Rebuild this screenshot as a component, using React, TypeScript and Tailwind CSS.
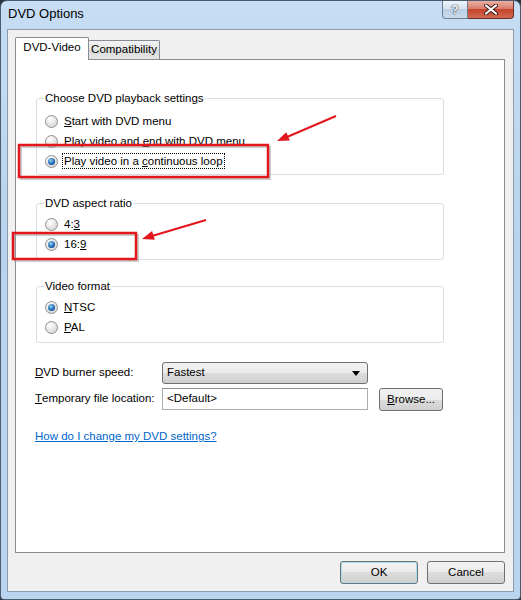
import * as React from 'react';

const font = { fontFamily: '"Liberation Sans", Arial, sans-serif' };

const Radio: React.FC<{ checked?: boolean }> = ({ checked }) => (
  <span className="ml-px flex h-[13px] w-[13px] shrink-0 items-center justify-center rounded-full border border-[#8e8f8f] bg-[radial-gradient(circle_at_35%_30%,#ffffff,#dcdcdc_70%,#cfcfcf)]">
    {checked ? (
      <span className="h-[7px] w-[7px] rounded-full bg-[radial-gradient(circle_at_40%_35%,#8fd0f7,#1a62ad_60%,#0d3f7a)]" />
    ) : null}
  </span>
);

const Option: React.FC<{ checked?: boolean; focused?: boolean; children: React.ReactNode }> = ({
  checked,
  focused,
  children,
}) => (
  <div className="flex h-[20px] items-center gap-[4px]">
    <Radio checked={checked} />
    <span className={focused ? 'border border-dotted border-black px-px leading-[14px]' : 'px-[2px] leading-[14px]'}>
      {children}
    </span>
  </div>
);

const GroupBox: React.FC<{ title: string; className?: string; children: React.ReactNode }> = ({
  title,
  className,
  children,
}) => (
  <fieldset className={`w-[408px] rounded-[3px] border border-[#d5dfe5] px-[7px] ${className ?? ''}`}>
    <legend className="px-px leading-[16px]">{title}</legend>
    {children}
  </fieldset>
);

const buttonClass =
  'flex items-center justify-center rounded-[3px] border border-[#707070] bg-[linear-gradient(#f2f2f2_0%,#ebebeb_50%,#dddddd_50%,#cfcfcf_100%)]';

export default function App() {
  return (
    <div className="relative h-[600px] w-[521px] bg-[#2a3440] text-[11.5px] text-black" style={font}>
      <div className="flex h-full flex-col rounded-t-[7px] rounded-b-[4px] border border-[#4b5c6e] bg-[linear-gradient(#c6ddf3,#b9d3ee_40%,#bad4ef)] px-[6px] pb-[7px]">
        {/* title bar */}
        <div className="flex h-[28px] items-start justify-between">
          <span className="pl-px pt-[5px] text-[13px] leading-[16px]">DVD Options</span>
          <div className="flex">
            <div className="flex h-[18px] w-[26px] items-center justify-center rounded-bl-[4px] border border-t-0 border-[#6d7f94] bg-[linear-gradient(#eef4fa,#d3e1ef_50%,#bccfe3_50%,#c9daea)]">
              <span className="text-[12px] font-bold leading-none text-white [text-shadow:0_0_1px_#2b3d52,0_0_1px_#2b3d52,0_0_1px_#2b3d52]">
                ?
              </span>
            </div>
            <div className="flex h-[18px] w-[46px] items-center justify-center rounded-br-[4px] border border-l-0 border-t-0 border-[#6b2d26] bg-[linear-gradient(#eab0a4,#d87765_50%,#c5442c_50%,#d2694f)]">
              <svg width="14" height="11" viewBox="0 0 14 11">
                <path d="M2 1.5 L12 9.5 M12 1.5 L2 9.5" stroke="#3a1a16" strokeWidth="4" strokeLinecap="round" />
                <path d="M2 1.5 L12 9.5 M12 1.5 L2 9.5" stroke="#ffffff" strokeWidth="2.2" strokeLinecap="round" />
              </svg>
            </div>
          </div>
        </div>

        {/* client area */}
        <div className="flex flex-1 flex-col border border-[#8d9bab] bg-[#f0f0f0] pt-[7px] pr-[8px] pb-[7px] pl-[7px]">
          <div className="flex h-[22px] items-end">
            <div className="relative z-10 -mb-px flex h-[23px] w-[74px] items-center justify-center rounded-t-[2px] border border-b-0 border-[#898c95] bg-white pb-[2px]">
              DVD-Video
            </div>
            <div className="-ml-px flex h-[19px] w-[72px] items-center justify-center rounded-t-[2px] border border-b-0 border-[#898c95] bg-[linear-gradient(#f3f3f3,#e5e5e5_50%,#d9d9d9_50%,#e6e6e6)]">
              Compatibility
            </div>
          </div>

          <div className="flex h-[494px] flex-col border border-[#898c95] bg-white pl-[20px]">
            <GroupBox title="Choose DVD playback settings" className="mt-[30px] pt-[5px] pb-[3px]">
              <Option>
                <u>S</u>tart with DVD menu
              </Option>
              <Option>
                Play video and <u>e</u>nd with DVD menu
              </Option>
              <Option checked focused>
                Play video in a <u>c</u>ontinuous loop
              </Option>
            </GroupBox>

            <GroupBox title="DVD aspect ratio" className="mt-[20px] pt-[3px] pb-[5px]">
              <Option>
                4:<u>3</u>
              </Option>
              <Option checked>
                16:<u>9</u>
              </Option>
            </GroupBox>

            <GroupBox title="Video format" className="mt-[18px] pt-[3px] pb-[5px]">
              <Option checked>
                <u>N</u>TSC
              </Option>
              <Option>
                <u>P</u>AL
              </Option>
            </GroupBox>

            <div className="mt-[19px] -ml-px flex h-[22px] items-center">
              <span className="w-[127px]">
                <u>D</u>VD burner speed:
              </span>
              <div className="flex h-[22px] w-[206px] items-center justify-between rounded-[3px] border border-[#707070] bg-[linear-gradient(#f2f2f2_0%,#ebebeb_50%,#dddddd_50%,#cfcfcf_100%)] pr-[7px] pl-[4px]">
                <span>Fastest</span>
                <svg width="8" height="5" viewBox="0 0 8 5">
                  <path d="M0 0 H8 L4 5 Z" fill="#000" />
                </svg>
              </div>
            </div>

            <div className="mt-[4px] -ml-px flex items-start">
              <span className="flex h-[22px] w-[127px] items-center">
                <u>T</u>emporary file location:
              </span>
              <div className="flex h-[22px] w-[206px] items-center border border-[#abadb3] border-t-[#8e8f8f] bg-white pl-[4px]">
                {'<Default>'}
              </div>
              <button className={`ml-[11px] h-[23px] w-[64px] ${buttonClass}`}>
                <span>
                  <u>B</u>rowse...
                </span>
              </button>
            </div>

            <a className="mt-[18px] -ml-px w-fit leading-[15px] text-[#0066cc] underline">
              How do I change my DVD settings?
            </a>
          </div>

          <div className="mt-[8px] flex justify-end gap-[9px]">
            <button
              className={`h-[23px] w-[78px] ${buttonClass} border-[#3c7fb1] shadow-[inset_0_0_0_1px_#a6def8]`}
            >
              OK
            </button>
            <button className={`h-[23px] w-[78px] ${buttonClass}`}>Cancel</button>
          </div>
        </div>
      </div>

      {/* red annotations */}
      <svg className="pointer-events-none absolute inset-0" width="521" height="600" viewBox="0 0 521 600">
        <rect x="21" y="147" width="249" height="32" fill="none" stroke="#9a9a9a" strokeOpacity="0.5" strokeWidth="2" />
        <rect x="19" y="145" width="249" height="32" fill="none" stroke="#e3161e" strokeWidth="2.5" />
        <rect x="15" y="235" width="123" height="26" fill="none" stroke="#9a9a9a" strokeOpacity="0.5" strokeWidth="2" />
        <rect x="13" y="233" width="123" height="26" fill="none" stroke="#e3161e" strokeWidth="2.5" />
        <line x1="336" y1="116" x2="287" y2="137" stroke="#e3161e" strokeWidth="2" />
        <polygon points="277,141 289.8,140.5 286.3,132.2" fill="#e3161e" />
        <line x1="206" y1="220" x2="152" y2="236" stroke="#e3161e" strokeWidth="2" />
        <polygon points="142,239 154.8,239.7 152.1,231.1" fill="#e3161e" />
      </svg>
    </div>
  );
}
